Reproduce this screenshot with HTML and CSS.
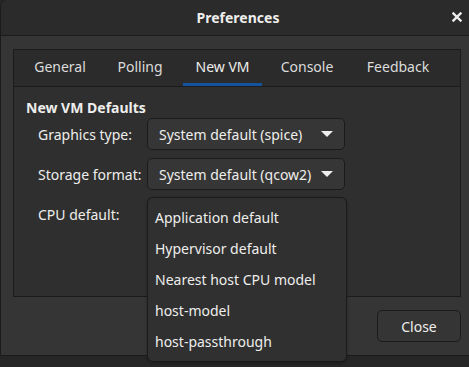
FILE: index.html
```html
<!DOCTYPE html>
<html>
<head>
<meta charset="utf-8">
<link rel="stylesheet" href="styles.css">
</head>
<body>
<div class="window">
  <div class="titlebar">
    <span class="title">Preferences</span>
    <span class="close-x">
      <svg width="10" height="10" viewBox="0 0 10 10"><path d="M1.5 1.5 L8.5 8.5 M8.5 1.5 L1.5 8.5" stroke="#eeeeec" stroke-width="2.4" stroke-linecap="square"/></svg>
    </span>
  </div>
  <div class="body">
    <div class="notebook">
      <div class="tabs">
        <div class="tab">General</div>
        <div class="tab">Polling</div>
        <div class="tab active">New VM</div>
        <div class="tab">Console</div>
        <div class="tab">Feedback</div>
      </div>
      <div class="page">
        <div class="heading">New VM Defaults</div>
        <div class="form">
          <div class="label">Graphics type:</div>
          <div class="combo"><span>System default (spice)</span><span class="arrow"></span></div>
          <div class="label">Storage format:</div>
          <div class="combo"><span>System default (qcow2)</span><span class="arrow"></span></div>
          <div class="label cpu">CPU default:</div>
          <div class="cpu-slot"></div>
        </div>
        <div class="popover">
          <div class="item">Application default</div>
          <div class="item">Hypervisor default</div>
          <div class="item">Nearest host CPU model</div>
          <div class="item">host-model</div>
          <div class="item">host-passthrough</div>
        </div>
      </div>
    </div>
    <div class="actions">
      <button class="btn">Close</button>
    </div>
  </div>
</div>
</body>
</html>
```

FILE: styles.css
```css
html, body {
  margin: 0;
  padding: 0;
  background: #262626;
  overflow: hidden;
  height: 367px;
}
body {
  font-family: "Noto Sans", "Open Sans", sans-serif;
  font-size: 14px;
  color: #eeeeec;
}
.window {
  width: 480px;
  height: 355px;
  background: #353535;
  border: 1px solid #1b1b1b;
  border-top: none;
  border-radius: 8px 8px 0 0;
  display: flex;
  flex-direction: column;
}
.titlebar {
  height: 35px;
  flex: none;
  background: #2b2b2b;
  border-bottom: 1px solid #1b1b1b;
  border-radius: 8px 8px 0 0;
  position: relative;
  display: flex;
  align-items: center;
  justify-content: center;
  padding-right: 8px;
}
.title {
  font-weight: bold;
  font-size: 14px;
  margin-left: 2px;
}
.close-x {
  position: absolute;
  left: 451px;
  top: 12px;
  width: 10px;
  height: 10px;
  display: flex;
}
.body {
  flex: 1;
  padding: 13px 0 0 12px;
  display: flex;
  flex-direction: column;
}
.notebook {
  width: 446px;
  height: 246px;
  border: 1px solid #1b1b1b;
  background: #2f2f2f;
  display: flex;
  flex-direction: column;
}
.tabs {
  height: 36px;
  flex: none;
  background: #2b2b2b;
  border-bottom: 1px solid #1b1b1b;
  display: flex;
  padding-left: 5px;
}
.tab {
  flex: none;
  padding: 0 15px;
  margin: 0 1px;
  height: 33px;
  border-bottom: 3px solid transparent;
  font-size: 14px;
  color: #dcdcdc;
  white-space: nowrap;
  display: flex;
  align-items: center;
  justify-content: center;
}
.tab:nth-child(1) { width: 50px; }
.tab:nth-child(2) { width: 46px; margin-right: 4px; }
.tab:nth-child(3) { width: 49px; }
.tab:nth-child(4) { width: 56px; }
.tab:nth-child(5) { width: 62px; }
.tab.active {
  border-bottom-color: #15539e;
  color: #eeeeec;
}
.page {
  flex: 1;
  position: relative;
  padding: 12px 12px 0 12px;
}
.heading {
  font-weight: bold;
  line-height: 18px;
}
.form {
  display: grid;
  grid-template-columns: 109px 198px;
  grid-template-rows: 32px 32px 32px;
  row-gap: 8px;
  margin-top: 1px;
  padding-left: 12px;
}
.label {
  display: flex;
  align-items: center;
  white-space: nowrap;
}
.label.cpu {
  align-items: flex-start;
  padding-top: 7px;
}
.combo {
  border: 1px solid #1b1b1b;
  border-radius: 5px;
  background: #363636;
  display: flex;
  align-items: center;
  justify-content: space-between;
  padding: 0 11px;
  white-space: nowrap;
}
.arrow {
  width: 0;
  height: 0;
  border-left: 6px solid transparent;
  border-right: 6px solid transparent;
  border-top: 6px solid #eeeeec;
}
.popover {
  position: absolute;
  left: 133px;
  top: 110px;
  width: 200px;
  height: 165px;
  box-sizing: border-box;
  background: #303030;
  border: 1px solid #1b1b1b;
  border-radius: 6px;
  padding: 4px 0 0 0;
  box-shadow: 0 1px 3px rgba(0,0,0,0.3);
  z-index: 2;
}
.item {
  height: 31px;
  line-height: 31px;
  padding-left: 7px;
  white-space: nowrap;
}
.actions {
  display: flex;
  justify-content: flex-end;
  padding-top: 13px;
  width: 448px;
}
.btn {
  width: 84px;
  height: 32px;
  background: #353535;
  border: 1px solid #1b1b1b;
  border-radius: 5px;
  color: #eeeeec;
  font-family: inherit;
  font-size: 14px;
  padding: 0;
}
```
